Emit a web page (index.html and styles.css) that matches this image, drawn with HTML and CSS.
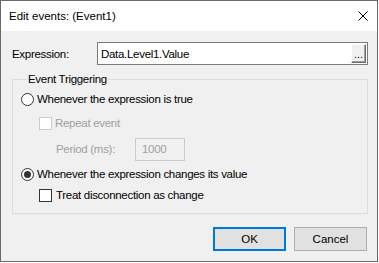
FILE: index.html
```html
<!DOCTYPE html>
<html lang="en">
<head>
    <meta charset="UTF-8">
    <title>Edit events</title>
    <link rel="stylesheet" href="styles.css">
</head>
<body>
    <div class="window">
        <div class="title-bar">
            <span>Edit events: (Event1)</span>
            <svg class="close" width="10" height="10" viewBox="0 0 10 10">
                <path d="M0.5 0.5 L9.5 9.5 M9.5 0.5 L0.5 9.5" stroke="#000" stroke-width="1"/>
            </svg>
        </div>
        <div class="content">
            <div class="expr-row">
                <span class="expr-label">Expression:</span>
                <div class="textbox">
                    <span class="textbox-value">Data.Level1.Value</span>
                    <button class="dots">...</button>
                </div>
            </div>
            <fieldset class="group">
                <legend>Event Triggering</legend>
                <div class="opt row-a">
                    <span class="radio"></span>
                    <span>Whenever the expression is true</span>
                </div>
                <div class="opt row-b sub disabled">
                    <span class="check"></span>
                    <span>Repeat event</span>
                </div>
                <div class="opt row-c period disabled">
                    <span class="period-label">Period (ms):</span>
                    <span class="period-box">1000</span>
                </div>
                <div class="opt row-d">
                    <span class="radio checked"></span>
                    <span>Whenever the expression changes its value</span>
                </div>
                <div class="opt row-e sub">
                    <span class="check"></span>
                    <span class="cb-text">Treat disconnection as change</span>
                </div>
            </fieldset>
            <div class="buttons">
                <button class="button default">OK</button>
                <button class="button">Cancel</button>
            </div>
        </div>
    </div>
</body>
</html>
```

FILE: styles.css
```css
body {
    margin: 0;
    background: #ffffff;
    font-family: 'Liberation Sans', Arial, sans-serif;
    font-size: 11.5px;
    letter-spacing: -0.3px;
    color: #000;
}
.window {
    width: 378px;
    height: 262px;
    box-sizing: border-box;
    border: 1px solid #6a6a6a;
    display: flex;
    flex-direction: column;
}
.title-bar {
    height: 30px;
    background: #fff;
    display: flex;
    justify-content: space-between;
    align-items: center;
    padding: 0 9px 0 8px;
    flex-shrink: 0;
    letter-spacing: 0;
}
.close {
    display: block;
}
.content {
    flex: 1;
    background: #f0f0f0;
    padding: 0 9px 0 11px;
}
.expr-row {
    display: flex;
    align-items: center;
    margin-top: 11px;
    height: 23px;
}
.expr-label {
    width: 85px;
}
.textbox {
    flex: 1;
    height: 23px;
    box-sizing: border-box;
    border: 1px solid #7a7a7a;
    background: #fff;
    display: flex;
    align-items: center;
    justify-content: space-between;
    padding: 0 1px 0 3px;
}
.dots {
    width: 15px;
    height: 19px;
    padding: 0;
    margin: 0;
    font: inherit;
    font-size: 11px;
    letter-spacing: 0;
    line-height: 12px;
    background: #f0f0f0;
    border: 1px solid;
    border-color: #fff #6a6a6a #6a6a6a #fff;
    box-shadow: inset -1px -1px 0 #a0a0a0;
}
.group {
    margin: 6px 0 0 0;
    padding: 0 0 8px 8px;
    border: 1px solid #dcdcdc;
    min-width: 0;
}
.group legend {
    padding: 0 1px;
    margin-left: 6px;
    line-height: 16px;
}
.opt {
    display: flex;
    align-items: center;
    gap: 3px;
}
.row-a { height: 24px; }
.row-b { height: 24px; }
.row-c { height: 28px; }
.row-d { height: 22px; }
.row-e { height: 20px; }
.sub {
    padding-left: 18px;
}
.disabled {
    color: #a0a0a0;
}
.radio {
    width: 13px;
    height: 13px;
    box-sizing: border-box;
    border: 1px solid #333;
    border-radius: 50%;
    background: #fff;
    display: flex;
    align-items: center;
    justify-content: center;
}
.radio.checked::after {
    content: "";
    width: 7px;
    height: 7px;
    border-radius: 50%;
    background: #333;
}
.check {
    width: 13px;
    height: 13px;
    box-sizing: border-box;
    border: 1px solid #333;
    background: #fff;
}
.disabled .check {
    border-color: #cccccc;
}
.cb-text {
    margin-left: 1px;
}
.period {
    padding-left: 35px;
}
.period-label {
    width: 76px;
}
.period-box {
    width: 50px;
    height: 23px;
    box-sizing: border-box;
    border: 1px solid #cccccc;
    padding-left: 6px;
    display: flex;
    align-items: center;
}
.buttons {
    display: flex;
    justify-content: flex-end;
    gap: 8px;
    margin-top: 13px;
    padding-right: 1px;
}
.button {
    width: 73px;
    height: 24px;
    box-sizing: border-box;
    background: #e1e1e1;
    border: 1px solid #adadad;
    font: inherit;
    padding: 0;
}
.button.default {
    border: 2px solid #0078d7;
}
```
